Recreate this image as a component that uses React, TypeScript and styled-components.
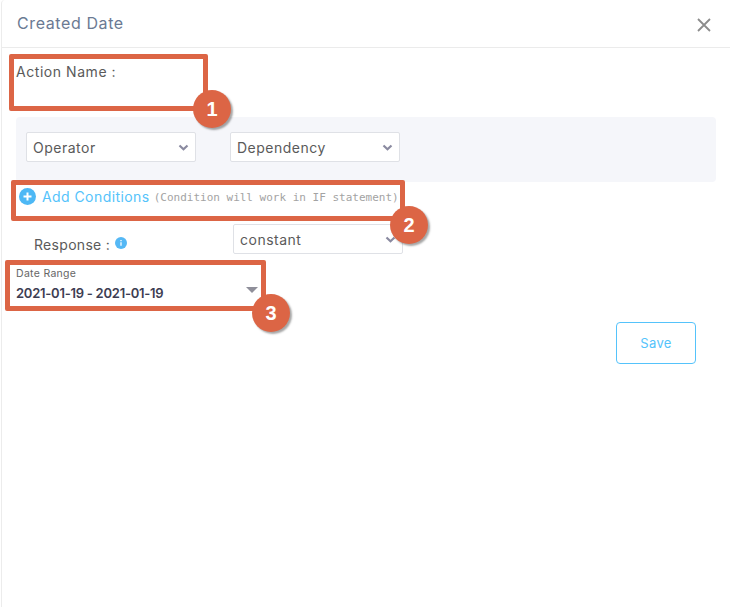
import React from 'react';
import styled, { createGlobalStyle } from 'styled-components';

const GlobalStyle = createGlobalStyle`
  html, body {
    background: #fff;
    margin: 0;
    padding: 0;
  }

  body {
    font-family: Inter, "Open Sans", sans-serif;
  }
`;

const Modal = styled.div`
  background: #fff;
  border-left: 1px solid #ececec;
  border-top-left-radius: 4px;
  box-sizing: border-box;
  height: 607px;
  margin-left: 1px;
  overflow: hidden;
  position: relative;
  width: 729px;
`;

const Header = styled.div`
  align-items: center;
  border-bottom: 1px solid #ebebeb;
  box-sizing: border-box;
  display: flex;
  height: 48px;
  justify-content: space-between;
  padding: 0 19px 2px 15px;
`;

const Title = styled.h2`
  color: #6b7a93;
  font-size: 16px;
  font-weight: 400;
  letter-spacing: 0.6px;
  margin: 0;
`;

const CloseIcon = styled.svg`
  display: block;
  height: 14px;
  margin-top: 5px;
  width: 14px;
`;

const Body = styled.div`
  padding: 15px 14px 0;
`;

const ActionName = styled.div`
  color: #5a5a5a;
  font-size: 14px;
  height: 54px;
  letter-spacing: 0.55px;
  line-height: 17px;
`;

const Panel = styled.div`
  background: #f5f6fa;
  border-radius: 4px;
  box-sizing: border-box;
  display: flex;
  gap: 34px;
  height: 65px;
  padding: 15px 10px;
  width: 700px;
`;

const Select = styled.div`
  align-items: center;
  background: #fff;
  border: 1px solid #dfe1e6;
  border-radius: 2px;
  box-sizing: border-box;
  color: #5a5a5a;
  display: flex;
  font-size: 14px;
  height: 30px;
  justify-content: space-between;
  letter-spacing: 0.5px;
  padding: 0 6px;
  width: 170px;
`;

const Chevron = styled.svg`
  display: block;
  height: 7px;
  width: 11px;
`;

const ConditionRow = styled.div`
  align-items: center;
  box-sizing: border-box;
  display: flex;
  height: 30px;
  margin-left: 3px;
  padding-bottom: 2px;
`;

const AddIcon = styled.svg`
  display: block;
  height: 17px;
  margin-right: 6px;
  width: 17px;
`;

const AddLabel = styled.span`
  color: #55c3fb;
  font-size: 14px;
  letter-spacing: 0.43px;
  margin-right: 4px;
`;

const ConditionHint = styled.span`
  color: #a3a3a3;
  font-family: "DejaVu Sans Mono", "Liberation Mono", monospace;
  font-size: 11px;
  margin-top: 2px;
`;

const ResponseRow = styled.div`
  display: flex;
  height: 30px;
  margin-top: 12px;
`;

const ResponseLabel = styled.div`
  align-items: center;
  box-sizing: border-box;
  color: #5a5a5a;
  display: flex;
  font-size: 14px;
  gap: 5px;
  letter-spacing: 0.3px;
  padding-left: 18px;
  padding-top: 11px;
  width: 217px;
`;

const InfoIcon = styled.svg`
  display: block;
  height: 12px;
  margin-top: -3px;
  width: 12px;
`;

const DateRange = styled.div`
  box-sizing: border-box;
  height: 36px;
  margin-top: 13px;
  position: relative;
  width: 242px;
`;

const DateLabel = styled.div`
  color: #666;
  font-size: 10.5px;
  letter-spacing: 0.3px;
  line-height: 13px;
`;

const DateValue = styled.div`
  color: #3d3d52;
  font-size: 13px;
  font-weight: 600;
  letter-spacing: -0.25px;
  line-height: 17px;
  margin-top: 5px;
`;

const Caret = styled.span`
  border-left: 6.5px solid transparent;
  border-right: 6.5px solid transparent;
  border-top: 6px solid #8f8f9a;
  height: 0;
  position: absolute;
  right: 0;
  top: 20px;
  width: 0;
`;

const Actions = styled.div`
  display: flex;
  justify-content: flex-end;
  margin-top: 19px;
  padding-right: 20px;
`;

const SaveButton = styled.button`
  background: #fff;
  border: 1px solid #55c3fb;
  border-radius: 4px;
  color: #55c3fb;
  font-family: inherit;
  font-size: 13px;
  height: 42px;
  letter-spacing: 0.3px;
  padding: 0;
  width: 80px;
`;

// callouts drawn over the screenshot
const Callout = styled.div<{ $x: number; $y: number; $w: number; $h: number }>`
  border: 5px solid #dc6545;
  border-radius: 2px;
  box-sizing: border-box;
  height: ${(p) => p.$h}px;
  left: ${(p) => p.$x}px;
  position: absolute;
  top: ${(p) => p.$y}px;
  width: ${(p) => p.$w}px;
`;

const Badge = styled.div<{ $x: number; $y: number }>`
  align-items: center;
  background: #dc6545;
  border-radius: 50%;
  box-shadow: 2px 2px 2px rgba(0, 0, 0, 0.35);
  color: #fff;
  display: flex;
  font-family: "Liberation Sans", Arial, sans-serif;
  font-size: 20px;
  font-weight: 700;
  height: 38px;
  justify-content: center;
  left: ${(p) => p.$x - 19}px;
  position: absolute;
  top: ${(p) => p.$y - 19}px;
  width: 38px;
`;

const ChevronDown = () => (
  <Chevron viewBox="0 0 11 7">
    <path d="M1.5 1.5 5.5 5.2 9.5 1.5" fill="none" stroke="#8a8aa0" strokeWidth="2.2" />
  </Chevron>
);

const App = () => (
  <>
    <GlobalStyle />
    <Modal>
      <Header>
        <Title>Created Date</Title>
        <CloseIcon viewBox="0 0 14 14">
          <path d="M1 1 13 13M13 1 1 13" stroke="#8c8c8c" strokeWidth="1.8" fill="none" />
        </CloseIcon>
      </Header>
      <Body>
        <ActionName>Action Name :</ActionName>
        <Panel>
          <Select>
            Operator
            <ChevronDown />
          </Select>
          <Select>
            Dependency
            <ChevronDown />
          </Select>
        </Panel>
        <ConditionRow>
          <AddIcon viewBox="0 0 17 17">
            <circle cx="8.5" cy="8.5" r="8.5" fill="#4db8f5" />
            <path d="M4.5 8.5h8M8.5 4.5v8" stroke="#fff" strokeWidth="2" />
          </AddIcon>
          <AddLabel>Add Conditions</AddLabel>
          <ConditionHint>(Condition will work in IF statement)</ConditionHint>
        </ConditionRow>
        <ResponseRow>
          <ResponseLabel>
            Response :
            <InfoIcon viewBox="0 0 12 12">
              <circle cx="6" cy="6" r="6" fill="#55b8f5" />
              <path d="M6 5.2v3.6M6 3v1.2" stroke="#fff" strokeWidth="1.3" />
            </InfoIcon>
          </ResponseLabel>
          <Select>
            constant
            <ChevronDown />
          </Select>
        </ResponseRow>
        <DateRange>
          <DateLabel>Date Range</DateLabel>
          <DateValue>2021-01-19 - 2021-01-19</DateValue>
          <Caret />
        </DateRange>
        <Actions>
          <SaveButton>Save</SaveButton>
        </Actions>
      </Body>
      <Callout $x={7} $y={54} $w={199} $h={57} />
      <Callout $x={9} $y={180} $w={394} $h={41} />
      <Callout $x={3} $y={260} $w={261} $h={51} />
      <Badge $x={210} $y={109}>1</Badge>
      <Badge $x={407} $y={225}>2</Badge>
      <Badge $x={269} $y={313}>3</Badge>
    </Modal>
  </>
);

export default App;
